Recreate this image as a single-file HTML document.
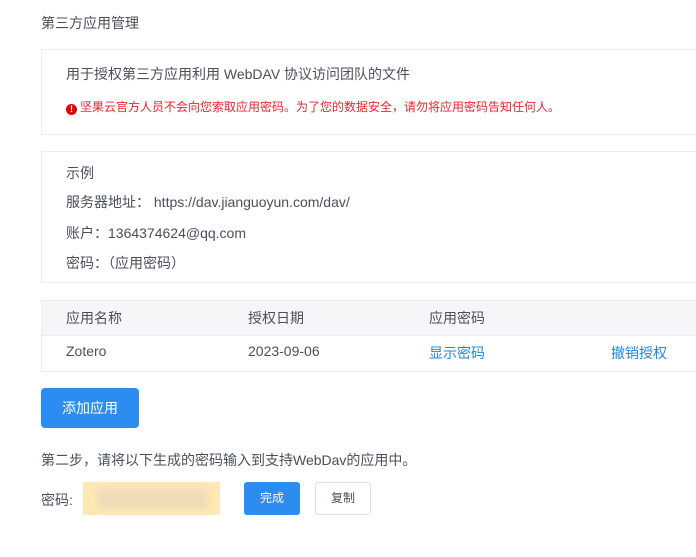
<!DOCTYPE html><html><head><meta charset="utf-8"><style>
body{margin:0;width:696px;height:557px;background:#fff;font-family:"Liberation Sans","Noto Sans CJK SC",sans-serif;font-size:14px;color:#4a4f5a;position:relative;overflow:hidden}
.a{position:absolute;white-space:nowrap}
.box{position:absolute;left:41px;width:700px;border:1px solid #ebedf0;box-sizing:border-box}
</style></head><body>
<div class="a" style="left:41px;top:13px">第三方应用管理</div>
<div class="box" style="top:49px;height:86px"></div>
<div class="a" style="left:66px;top:64px">用于授权第三方应用利用 WebDAV 协议访问团队的文件</div>
<div class="a" style="left:66px;top:98px;font-size:12px;color:#f5222d"><span style="display:inline-block;width:11px;height:11px;border-radius:50%;background:#e60000;color:#fff;font-size:9px;line-height:11px;text-align:center;font-weight:bold;vertical-align:-1px;margin-right:3px">!</span>坚果云官方人员不会向您索取应用密码。为了您的数据安全，请勿将应用密码告知任何人。</div>
<div class="box" style="top:151px;height:132px"></div>
<div class="a" style="left:66px;top:163px">示例</div>
<div class="a" style="left:66px;top:192px">服务器地址： https://dav.jianguoyun.com/dav/</div>
<div class="a" style="left:66px;top:223px">账户：1364374624@qq.com</div>
<div class="a" style="left:66px;top:253px">密码：（应用密码）</div>
<div class="box" style="top:300px;height:72px"></div>
<div style="position:absolute;left:42px;top:301px;width:700px;height:34px;background:#f5f6f8;border-bottom:1px solid #ebedf0"></div>
<div class="a" style="left:66px;top:308px">应用名称</div>
<div class="a" style="left:248px;top:308px">授权日期</div>
<div class="a" style="left:429px;top:308px">应用密码</div>
<div class="a" style="left:66px;top:343px">Zotero</div>
<div class="a" style="left:248px;top:343px">2023-09-06</div>
<div class="a" style="left:429px;top:343px;color:#1e88e5">显示密码</div>
<div class="a" style="left:611px;top:343px;color:#1e88e5">撤销授权</div>
<div class="a" style="left:41px;top:388px;width:98px;height:40px;background:#2d8cf0;border-radius:4px;color:#fff;text-align:center;line-height:40px">添加应用</div>
<div class="a" style="left:41px;top:450px">第二步，请将以下生成的密码输入到支持WebDav的应用中。</div>
<div class="a" style="left:41px;top:490px">密码:</div>
<div class="a" style="left:83px;top:482px;width:137px;height:33px;background:#ffe8b3"><div style="position:absolute;left:15px;top:7px;width:110px;height:20px;background:#eedcb8;filter:blur(3px)"></div></div>
<div class="a" style="left:244px;top:482px;width:56px;height:33px;background:#2d8cf0;border-radius:3px;color:#fff;text-align:center;line-height:33px;font-size:12px">完成</div>
<div class="a" style="left:315px;top:482px;width:56px;height:33px;border:1px solid #dcdfe6;box-sizing:border-box;border-radius:3px;text-align:center;line-height:31px;font-size:12px">复制</div>
</body></html>
